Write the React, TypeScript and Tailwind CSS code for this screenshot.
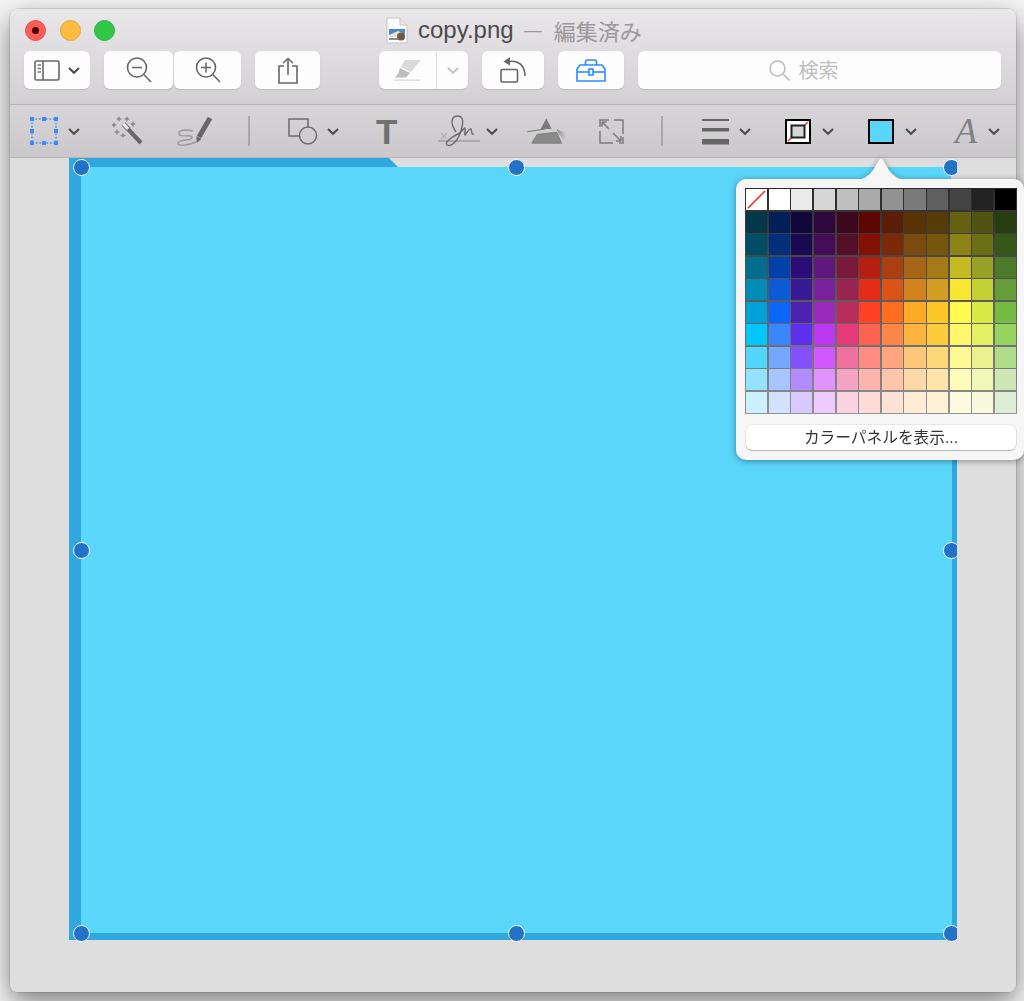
const PALETTE: string[][] = [
  ["#ffffff", "#ffffff", "#ebebeb", "#d6d6d6", "#c0c0c0", "#aaaaaa", "#929292", "#7a7a7a", "#5f5f5f", "#444444", "#232323", "#000000"],
  ["#03374a", "#031f57", "#11073b", "#2e083d", "#3c081d", "#5c0704", "#5a1d06", "#583308", "#563d08", "#666110", "#4f5510", "#263e10"],
  ["#004d65", "#012f7b", "#1a0a52", "#450d59", "#551029", "#831106", "#7b2a08", "#7a4b0c", "#75560a", "#8b8415", "#6c7014", "#375719"],
  ["#016e8f", "#0042a9", "#2c0d77", "#61187c", "#791a3d", "#b51e10", "#ac3f10", "#a76615", "#a67a14", "#c6ba24", "#98a125", "#4e7a2c"],
  ["#008cb4", "#0a5cd6", "#371a94", "#7a219e", "#99244f", "#e42c16", "#d95416", "#d3831d", "#d39c22", "#f7e733", "#c4d033", "#669d3a"],
  ["#00a1d8", "#0c66fd", "#4d22b2", "#982abc", "#b92d5d", "#ff4224", "#ff6d1f", "#ffab27", "#fdc727", "#fffb4e", "#d9e947", "#76bb44"],
  ["#01c7fc", "#3a87fd", "#5e30eb", "#be38f3", "#e63b7a", "#fe6250", "#fe8648", "#feb43f", "#fecb3e", "#fff76b", "#e4ef65", "#96d35f"],
  ["#52d6fc", "#74a7ff", "#864ffd", "#d357fe", "#ee719e", "#ff8c82", "#fea57d", "#fec777", "#fed877", "#fff994", "#eaf28f", "#b1dd8b"],
  ["#93e3fc", "#a7c6ff", "#b18cfe", "#e292fe", "#f4a4c0", "#ffb5af", "#ffc5ab", "#fed9a8", "#fde4a8", "#fffbb9", "#f1f7b7", "#cde8b5"],
  ["#cbf0ff", "#d2e2fe", "#d8c9fe", "#efcafe", "#f9d3e0", "#ffdbd8", "#ffe2d6", "#ffecd4", "#fef1d5", "#fdfbdd", "#f6fadb", "#deeed4"],
];

const HANDLES = [
  "left-[3.5px] top-[0.5px]",
  "left-[438.5px] top-[0.5px]",
  "left-[873.5px] top-[0.5px]",
  "left-[3.5px] top-[383.5px]",
  "left-[873.5px] top-[383.5px]",
  "left-[3.5px] top-[766.5px]",
  "left-[438.5px] top-[766.5px]",
  "left-[873.5px] top-[766.5px]",
];

function Chevron({ className = "", color = "#4a4a4a" }: { className?: string; color?: string }) {
  return (
    <svg width="14" height="9" viewBox="0 0 14 9" className={`shrink-0 ${className}`}>
      <polyline points="2,2 7,6.8 12,2" fill="none" stroke={color} strokeWidth="2" />
    </svg>
  );
}

function Btn({ className, children }: { className: string; children?: React.ReactNode }) {
  return (
    <div className={`flex h-[38px] shrink-0 items-center justify-center rounded-[6px] bg-[#fdfdfd] shadow-[0_1px_1px_rgba(0,0,0,0.12)] ${className}`}>
      {children}
    </div>
  );
}

function Magnifier({ plus }: { plus?: boolean }) {
  return (
    <svg width="26" height="26" viewBox="0 0 26 26">
      <circle cx="11" cy="10.5" r="9.5" fill="none" stroke="#666" strokeWidth="1.6" />
      <line x1="17.8" y1="17.5" x2="25" y2="25" stroke="#666" strokeWidth="1.6" />
      <line x1="6" y1="10.5" x2="16" y2="10.5" stroke="#666" strokeWidth="1.5" />
      {plus && <line x1="11" y1="5.5" x2="11" y2="15.5" stroke="#666" strokeWidth="1.5" />}
    </svg>
  );
}

function TitleIcon() {
  return (
    <svg width="22" height="27" viewBox="0 0 22 27" className="shrink-0">
      <path d="M1 1 H14 L21 8 V26 H1 Z" fill="#fbfbfb" stroke="#c4c4c4" />
      <path d="M14 1 V8 H21" fill="#e8e8e8" stroke="#c4c4c4" />
      <rect x="3" y="12" width="16" height="8" fill="#4f87c2" />
      <path d="M3 18 L12 14 L19 17 V20 H3 Z" fill="#e8e4da" />
      <circle cx="15" cy="19.5" r="4" fill="#6a5a48" />
      <rect x="3" y="21" width="9" height="2" fill="#8a8a8a" />
    </svg>
  );
}

function Selection() {
  const squares = [[0, 0], [12, 0], [24, 0], [0, 12], [24, 12], [0, 24], [12, 24], [24, 24]];
  return (
    <svg width="28" height="28" viewBox="0 0 28 28" className="shrink-0">
      <rect x="2" y="2" width="24" height="24" fill="none" stroke="#3b8bff" strokeWidth="1.5" strokeDasharray="1.5 2" />
      {squares.map(([x, y]) => (
        <rect key={`${x}-${y}`} x={x} y={y} width="4" height="4" fill="#3b8bff" />
      ))}
    </svg>
  );
}

function Wand() {
  return (
    <svg width="32" height="30" viewBox="0 0 32 30" className="shrink-0">
      <line x1="16" y1="13" x2="29" y2="27" stroke="#686868" strokeWidth="4.2" />
      <line x1="11.5" y1="8" x2="16.5" y2="13.5" stroke="#777" strokeWidth="5" />
      <line x1="11.5" y1="8" x2="16" y2="13" stroke="#eeeeee" strokeWidth="3" />
      <g fill="#8a8a8a">
        <path d="M7 0 L8 2 L10 3 L8 4 L7 6 L6 4 L4 3 L6 2 Z" />
        <path d="M15 0 L16 2 L18 3 L16 4 L15 6 L14 4 L12 3 L14 2 Z" />
        <path d="M2 6 L3 8 L5 9 L3 10 L2 12 L1 10 L-1 9 L1 8 Z" />
        <path d="M21 5 L22 7 L24 8 L22 9 L21 11 L20 9 L18 8 L20 7 Z" />
        <path d="M5 13 L6 15 L8 16 L6 17 L5 19 L4 17 L2 16 L4 15 Z" />
        <path d="M11 17 L12 18.5 L14 19.5 L12 20.5 L11 22 L10 20.5 L8 19.5 L10 18.5 Z" />
      </g>
    </svg>
  );
}

function Sketch() {
  return (
    <svg width="36" height="32" viewBox="0 0 36 32" className="shrink-0">
      <path d="M33 3 L22 22" stroke="#686868" strokeWidth="5" fill="none" />
      <path d="M19.5 21 L24.5 24 L19.5 28 Z" fill="#686868" />
      <path d="M16 16 C9 14 1 15 2 19 C3 23 14 19 15 22 C16 26 2 24 1 28 C0 31 10 31 19 27" fill="none" stroke="#9a9a9a" strokeWidth="1.4" />
    </svg>
  );
}

function Shapes() {
  return (
    <svg width="31" height="27" viewBox="0 0 31 27" className="shrink-0">
      <path d="M11 18 H1 V1 H20 V9" fill="none" stroke="#6c6c6c" strokeWidth="1.5" />
      <circle cx="20" cy="17.5" r="8.5" fill="none" stroke="#6c6c6c" strokeWidth="1.5" />
    </svg>
  );
}

function Signature() {
  return (
    <svg width="42" height="32" viewBox="0 0 42 32" className="shrink-0">
      <line x1="0" y1="26" x2="42" y2="26" stroke="#9c9c9c" strokeWidth="1.3" />
      <path d="M3 18 L9 24 M9 18 L3 24" stroke="#b0b0b0" strokeWidth="1.2" />
      <path d="M18 17 C12 8 13 1 20 1 C27 1 25 12 21 21 C18 28 12 32 9 30 C6 27 14 22 20 19 C24 17 26 13 27 13 C28 15 26 20 27 20 C29 18 31 13 33 14 C34 16 33 20 36 19" fill="none" stroke="#6c6c6c" strokeWidth="1.4" />
    </svg>
  );
}

function Prism() {
  return (
    <svg width="40" height="30" viewBox="0 0 40 30" className="shrink-0">
      <defs>
        <linearGradient id="prismFade" x1="0" y1="0" x2="1" y2="0">
          <stop offset="0" stopColor="#8e8e8e" />
          <stop offset="1" stopColor="#cbc9cb" />
        </linearGradient>
      </defs>
      <path d="M29.7 13 L38.7 17.3 V25.7 L31 17 Z" fill="url(#prismFade)" />
      <path d="M19.3 2.3 L13.7 13 L24.7 13 Z" fill="#7a7a7a" />
      <path d="M10.3 18.3 L29.7 16.3 L34.7 27.3 H4.7 Z" fill="#8a8a8a" stroke="#777" strokeWidth="0.8" />
      <line x1="0.3" y1="15.7" x2="18" y2="13" stroke="#777" strokeWidth="1.1" />
    </svg>
  );
}

function Crop() {
  return (
    <svg width="25" height="25" viewBox="0 0 25 25" className="shrink-0" fill="none" stroke="#7c7c7c" strokeWidth="1.5">
      <path d="M10 1 H1 V8" />
      <path d="M15 1 H24 V15" />
      <path d="M1 12 V24 H14" />
      <path d="M20 24 H24 V18" />
      <path d="M3 3 L10 10 M3 3 H7.5 M3 3 V7.5" />
      <path d="M14 14 L22 22 M22 22 H17 M22 22 V17" />
    </svg>
  );
}

function Lines() {
  return (
    <svg width="27" height="27" viewBox="0 0 27 27" className="shrink-0" fill="#666">
      <rect x="0" y="1" width="27" height="2" />
      <rect x="0" y="10" width="27" height="3.5" />
      <rect x="0" y="21" width="27" height="5.5" />
    </svg>
  );
}

function BorderIcon() {
  return (
    <svg width="26" height="25" viewBox="0 0 26 25" className="shrink-0">
      <rect x="1" y="1" width="24" height="23" fill="#fff" stroke="#000" strokeWidth="2" />
      <line x1="3" y1="22" x2="23" y2="3" stroke="#f03a2e" strokeWidth="1.5" />
      <rect x="6.5" y="6.5" width="13" height="12" fill="#d6d6d6" stroke="#222" strokeWidth="2" />
    </svg>
  );
}

function FillIcon() {
  return <div className="h-[25px] w-[26px] shrink-0 border-2 border-black bg-[#5ad6fb]" />;
}

function Separator({ className }: { className: string }) {
  return <div className={`h-[30px] w-[2px] shrink-0 bg-[#a9a7a9] ${className}`} />;
}

export default function App() {
  return (
    <div className="h-[1001px] w-[1024px] overflow-hidden bg-[#f6f6f6] pl-[10px] pt-[9px] font-['Liberation_Sans','Noto_Sans_CJK_JP',sans-serif]">
      <div className="flex h-[983px] w-[1006px] flex-col rounded-[8px] shadow-[0_0_0_0.5px_rgba(0,0,0,0.2),0_10px_28px_rgba(0,0,0,0.5)]">
        {/* Title bar and main toolbar */}
        <div className="h-[96px] shrink-0 rounded-t-[8px] border-b border-[#b4b2b4] bg-gradient-to-b from-[#e9e7e9] to-[#d2d0d2]">
          <div className="flex h-[42px] items-center pl-[15px]">
            <div className="flex items-center gap-[13.5px]">
              <div className="flex h-[21px] w-[21px] items-center justify-center rounded-full border border-[#e2504c] bg-[#fc5d57]">
                <div className="h-[7px] w-[7px] rounded-full bg-[#4d0000]" />
              </div>
              <div className="h-[21px] w-[21px] rounded-full border border-[#e0a53a] bg-[#fdbb40]" />
              <div className="h-[21px] w-[21px] rounded-full border border-[#2cb13f] bg-[#33c748]" />
            </div>
            <div className="ml-[271px] flex items-center">
              <TitleIcon />
              <span className="ml-[10px] text-[24px] leading-none text-[#4c4a4c]">copy.png</span>
              <span className="ml-[10px] w-[18px] overflow-hidden text-[18px] leading-none text-[#9a989a]">—</span>
              <span className="ml-[12px] font-['Noto_Sans_CJK_JP',sans-serif] text-[22px] leading-none text-[#9a989a]">編集済み</span>
            </div>
          </div>
          <div className="flex pl-[14px]">
            <Btn className="w-[66px] gap-[7px]">
              <svg width="26" height="21" viewBox="0 0 26 21">
                <rect x="1" y="1" width="24" height="19" rx="1.5" fill="none" stroke="#666" strokeWidth="1.6" />
                <line x1="9" y1="1" x2="9" y2="20" stroke="#666" strokeWidth="1.6" />
                <path d="M3.5 5 H7 M3.5 8.5 H7 M3.5 12 H7" stroke="#777" strokeWidth="1.3" />
              </svg>
              <Chevron />
            </Btn>
            <Btn className="ml-[14px] w-[69px]"><Magnifier /></Btn>
            <Btn className="ml-[1px] w-[67px]"><Magnifier plus /></Btn>
            <Btn className="ml-[14px] w-[65px]">
              <svg width="20" height="27" viewBox="0 0 20 27" fill="none" stroke="#666" strokeWidth="1.6">
                <path d="M6 9 H1 V26 H19 V9 H14" />
                <path d="M10 18 V1.5 M5 6 L10 1.5 L15 6" />
              </svg>
            </Btn>
            <Btn className="ml-[59px] w-[89px] bg-[#fafafa]">
              <div className="flex w-[57px] items-center justify-center">
                <svg width="28" height="23" viewBox="0 0 28 23">
                  <path d="M11 1 H27 L17 13 L7 8 Z" fill="#dadada" />
                  <path d="M6 9 L16 14 L12 18.5 H1 L4 15 Z" fill="#bebebe" />
                  <rect x="0" y="20.5" width="26" height="1.4" fill="#dcdcdc" />
                </svg>
              </div>
              <div className="h-full w-px bg-[#dedede]" />
              <div className="flex flex-1 items-center justify-center">
                <Chevron color="#c4c4c4" />
              </div>
            </Btn>
            <Btn className="ml-[14px] w-[62px]">
              <svg width="27" height="26" viewBox="0 0 27 26" fill="none" stroke="#666" strokeWidth="1.6">
                <rect x="1" y="12.5" width="16.5" height="12.5" rx="1.5" />
                <path d="M9 4.5 C18 3 25 8 25 19" />
                <path d="M10 0 L3.5 4.5 L10 8.5 Z" fill="#666" stroke="none" />
              </svg>
            </Btn>
            <Btn className="ml-[14px] w-[66px]">
              <svg width="30" height="23" viewBox="0 0 30 23" fill="none" stroke="#2b8cff" strokeWidth="1.6">
                <path d="M9.5 6 V3 Q9.5 1 11.5 1 H18.5 Q20.5 1 20.5 3 V6" />
                <path d="M4 6 H26 L29 10 V22 H1 V10 Z" />
                <line x1="1" y1="13" x2="29" y2="13" />
                <rect x="13" y="10" width="4" height="6" fill="#fff" />
              </svg>
            </Btn>
            <Btn className="ml-[14px] w-[363px] gap-[9px] pr-[32px]">
              <svg width="21" height="21" viewBox="0 0 21 21" fill="none" stroke="#bdbdbd" strokeWidth="1.6">
                <circle cx="8.5" cy="8.5" r="7.5" />
                <line x1="14" y1="14" x2="20.5" y2="20.5" />
              </svg>
              <span className="font-['Noto_Sans_CJK_JP',sans-serif] text-[20px] leading-none text-[#bdbdbd]">検索</span>
            </Btn>
          </div>
        </div>

        {/* Markup toolbar */}
        <div className="flex h-[53px] shrink-0 items-center border-b border-[#b8b6b8] bg-gradient-to-b from-[#d7d5d7] to-[#cac8ca] pl-[20px]">
          <Selection />
          <Chevron className="ml-[9px]" />
          <div className="ml-[31px]"><Wand /></div>
          <div className="ml-[33px]"><Sketch /></div>
          <Separator className="ml-[35px]" />
          <div className="ml-[38px]"><Shapes /></div>
          <Chevron className="ml-[7px]" />
          <span className="ml-[36px] w-[20px] text-center font-['Liberation_Sans',sans-serif] text-[35px] font-bold leading-none text-[#707070]">T</span>
          <div className="ml-[42px]"><Signature /></div>
          <Chevron className="ml-[5px]" />
          <div className="ml-[28px]"><Prism /></div>
          <div className="ml-[32px]"><Crop /></div>
          <Separator className="ml-[37px]" />
          <div className="ml-[39px]"><Lines /></div>
          <Chevron className="ml-[9px]" />
          <div className="ml-[33px]"><BorderIcon /></div>
          <Chevron className="ml-[10px]" />
          <div className="ml-[33px]"><FillIcon /></div>
          <Chevron className="ml-[10px]" />
          <span className="ml-[37px] w-[22px] text-center font-['Liberation_Serif',serif] text-[36px] italic leading-none text-[#808080]">A</span>
          <Chevron className="ml-[10px]" />
        </div>

        {/* Document area */}
        <div className="relative flex-1 rounded-b-[8px] bg-[#dedede] pl-[59px]">
          <div className="relative h-[782px] w-[888px] bg-[#2fa8e0] pb-[7px] pl-[12px] pr-[5px] pt-[9px] [clip-path:inset(-3px_0_-3px_-3px)]">
            <div className="h-full w-full bg-[#5ad6fb]" />
            <div className="absolute left-[320px] top-0 h-[300px] w-[568px] bg-[#dedede] [clip-path:polygon(0_0,100%_0,100%_100%,562px_100%,562px_9px,9px_9px)]" />
            {HANDLES.map((pos) => (
              <div key={pos} className={`absolute h-[17px] w-[17px] rounded-full border-[1.5px] border-white bg-[#2272c8] ${pos}`} />
            ))}
          </div>

          {/* Color popover */}
          <div className="absolute left-[726px] top-[21px] h-[281px] w-[288px] rounded-[10px] bg-[#f6f6f6] pl-[9px] pt-[9px] drop-shadow-[0_1px_3px_rgba(0,0,0,0.4)]">
            <svg width="56" height="23" viewBox="0 0 56 23" className="absolute left-[117px] top-[-22px]">
              <path d="M0 23 Q14 23 20 13 L26 3 Q28 0 30 3 L36 13 Q42 23 56 23 Z" fill="#f6f6f6" />
            </svg>
            <div className="grid h-[226px] w-[272px] grid-cols-12 grid-rows-10 gap-[1.5px] bg-gradient-to-b from-[#2a2a2a] to-[#929292] p-[1px]">
              {PALETTE.flatMap((row, r) =>
                row.map((color, c) => (
                  <div key={`${r}-${c}`} style={{ backgroundColor: color }} className="relative overflow-hidden">
                    {r === 0 && c === 0 && (
                      <svg viewBox="0 0 22 22" className="absolute inset-0 h-full w-full">
                        <line x1="2" y1="20" x2="20" y2="2" stroke="#f23b30" strokeWidth="1.6" />
                      </svg>
                    )}
                  </div>
                ))
              )}
            </div>
            <div className="ml-[1px] mt-[11px] flex h-[25px] w-[270px] items-center justify-center rounded-[6px] bg-white text-[15.7px] leading-none text-[#333] shadow-[0_0_0_0.5px_rgba(0,0,0,0.12),0_1px_1px_rgba(0,0,0,0.22)]">
              カラーパネルを表示...
            </div>
          </div>
        </div>
      </div>
    </div>
  );
}
